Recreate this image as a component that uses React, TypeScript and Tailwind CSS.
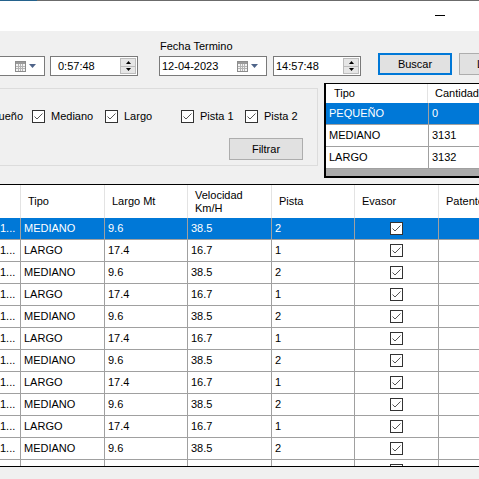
import React from "react";

const rows = Array.from({ length: 12 }, (_, i) =>
  i % 2 === 0
    ? { tipo: "MEDIANO", largo: "9.6", vel: "38.5", pista: "2" }
    : { tipo: "LARGO", largo: "17.4", vel: "16.7", pista: "1" }
);

function CheckGlyph() {
  return (
    <svg width="13" height="13" viewBox="0 0 13 13" className="shrink-0">
      <rect x="0.5" y="0.5" width="12" height="12" fill="#fff" stroke="#333" />
      <polyline points="2.5,6.5 5,9 10.5,3.5" fill="none" stroke="#555" strokeWidth="1" />
    </svg>
  );
}

function CalendarIcon() {
  return (
    <svg width="11" height="11" viewBox="0 0 11 11" className="shrink-0">
      <rect x="0.5" y="0.5" width="10" height="10" fill="#f4f4f4" stroke="#8c8c8c" />
      <rect x="1" y="1" width="9" height="2" fill="#9a9a9a" />
      <path d="M3.5 3v7M5.5 3v7M7.5 3v7M1 5.5h9M1 7.5h9" stroke="#b4b4b4" strokeWidth="1" />
    </svg>
  );
}

function DropArrow() {
  return (
    <svg width="7" height="4" viewBox="0 0 7 4" className="shrink-0">
      <polygon points="0,0 7,0 3.5,4" fill="#4f6489" />
    </svg>
  );
}

function Spinner() {
  return (
    <div className="mr-px flex h-[16px] w-[16px] shrink-0 flex-col border border-[#bcbcbc] bg-[#e6e6e6]">
      <div className="flex flex-1 items-center justify-center border-b border-[#bcbcbc]">
        <svg width="5" height="3" viewBox="0 0 5 3">
          <polygon points="2.5,0 5,3 0,3" fill="#000" />
        </svg>
      </div>
      <div className="flex flex-1 items-center justify-center">
        <svg width="5" height="3" viewBox="0 0 5 3">
          <polygon points="0,0 5,0 2.5,3" fill="#000" />
        </svg>
      </div>
    </div>
  );
}

function Check({ label, className }: { label: string; className?: string }) {
  return (
    <div className={`flex shrink-0 items-center gap-[6px] ${className ?? ""}`}>
      <CheckGlyph />
      <span className="whitespace-nowrap">{label}</span>
    </div>
  );
}

export default function App() {
  return (
    <div className="h-[479px] w-[479px] overflow-hidden bg-[#f0f0f0] font-['Liberation_Sans',Arial,sans-serif] text-[11px] leading-[13px] text-black">
      {/* window edge */}
      <div className="flex h-px">
        <div className="w-[37px] bg-[#24628c]" />
        <div className="flex-1 bg-[#6b6b6b]" />
      </div>

      {/* title bar */}
      <div className="flex h-[30px] justify-end bg-white pt-[14px]">
        <div className="mr-[34px] h-px w-[10px] bg-black" />
      </div>

      {/* dates */}
      <div className="h-[22px] pl-[160px] pt-[9px]">Fecha Termino</div>
      <div className="flex h-[30px] items-start">
        <div className="mt-[3px] flex h-[20px] w-[45px] shrink-0 items-center justify-end gap-[3px] border border-l-0 border-[#7a7a7a] bg-white pr-[8px]">
          <CalendarIcon />
          <DropArrow />
        </div>
        <div className="ml-[5px] mt-[3px] flex h-[20px] w-[88px] shrink-0 items-center justify-between border border-[#7a7a7a] bg-white pl-[7px]">
          <span>0:57:48</span>
          <Spinner />
        </div>
        <div className="ml-[21px] mt-[3px] flex h-[20px] w-[108px] shrink-0 items-center border border-[#7a7a7a] bg-white pl-[2px] pr-[8px]">
          <span className="flex-1">12-04-2023</span>
          <div className="flex items-center gap-[3px]">
            <CalendarIcon />
            <DropArrow />
          </div>
        </div>
        <div className="ml-[6px] mt-[3px] flex h-[20px] w-[88px] shrink-0 items-center justify-between border border-[#7a7a7a] bg-white pl-[2px]">
          <span>14:57:48</span>
          <Spinner />
        </div>
        <button className="ml-[17px] flex h-[22px] w-[74px] shrink-0 items-center justify-center border-2 border-[#0078d7] bg-[#e1e1e1]">
          Buscar
        </button>
        <button className="ml-[7px] flex h-[22px] w-[74px] shrink-0 items-center justify-start border border-[#adadad] bg-[#e1e1e1] pl-[17px]">
          Limpiar
        </button>
      </div>

      {/* filters + summary */}
      <div className="flex h-[101px]">
        <div className="mt-[5px] h-[78px] w-[318px] shrink-0 overflow-hidden border border-l-0 border-[#dcdcdc] pt-[21px]">
          <div className="flex h-[13px] items-center">
            <Check label="Pequeño" className="ml-[-40px] w-[72px]" />
            <Check label="Mediano" className="w-[73px]" />
            <Check label="Largo" className="w-[76px]" />
            <Check label="Pista 1" className="w-[64px]" />
            <Check label="Pista 2" />
          </div>
          <button className="ml-[229px] mt-[15px] flex h-[22px] w-[74px] items-center justify-center border border-[#adadad] bg-[#e1e1e1]">
            Filtrar
          </button>
        </div>
        <div className="ml-[6px] flex h-[95px] flex-1 flex-col overflow-hidden border-b-2 border-l-2 border-t border-black bg-[#ababab]">
          <div className="flex h-[19px] shrink-0 bg-white">
            <div className="flex w-[103px] items-center border-r border-[#e3e3e3] pl-[8px]">Tipo</div>
            <div className="flex flex-1 items-center pl-[7px]">Cantidad</div>
          </div>
          {[
            ["PEQUEÑO", "0"],
            ["MEDIANO", "3131"],
            ["LARGO", "3132"],
          ].map(([t, c], i) => (
            <div
              key={t}
              className={`flex h-[22px] shrink-0 border-b border-[#a0a0a0] ${i === 0 ? "bg-[#0078d7] text-white" : "bg-white"}`}
            >
              <div className="flex w-[103px] items-center border-r border-[#a0a0a0] pl-[3px]">{t}</div>
              <div className="flex flex-1 items-center pl-[3px]">{c}</div>
            </div>
          ))}
        </div>
      </div>

      {/* main grid */}
      <div className="flex h-[283px] flex-col overflow-hidden border-y border-black bg-white">
        <div className="flex h-[33px] shrink-0">
          <div className="w-[21px] shrink-0 border-r border-[#e3e3e3]" />
          <div className="flex w-[84px] shrink-0 items-center border-r border-[#e3e3e3] pl-[7px]">Tipo</div>
          <div className="flex w-[83px] shrink-0 items-center border-r border-[#e3e3e3] pl-[7px]">Largo Mt</div>
          <div className="flex w-[84px] shrink-0 items-center border-r border-[#e3e3e3] pl-[7px]">
            Velocidad
            <br />
            Km/H
          </div>
          <div className="flex w-[83px] shrink-0 items-center border-r border-[#e3e3e3] pl-[7px]">Pista</div>
          <div className="flex w-[84px] shrink-0 items-center border-r border-[#e3e3e3] pl-[7px]">Evasor</div>
          <div className="flex flex-1 items-center whitespace-nowrap pl-[7px]">Patente</div>
        </div>
        {rows.map((r, i) => (
          <div
            key={i}
            className={`flex h-[22px] shrink-0 border-b border-[#a0a0a0] ${i === 0 ? "bg-[#0078d7] text-white" : "bg-white"}`}
          >
            <div className="flex w-[21px] shrink-0 items-center overflow-hidden border-r border-[#a0a0a0]">1...</div>
            <div className="flex w-[84px] shrink-0 items-center border-r border-[#a0a0a0] pl-[3px]">{r.tipo}</div>
            <div className="flex w-[83px] shrink-0 items-center border-r border-[#a0a0a0] pl-[3px]">{r.largo}</div>
            <div className="flex w-[84px] shrink-0 items-center border-r border-[#a0a0a0] pl-[3px]">{r.vel}</div>
            <div className="flex w-[83px] shrink-0 items-center border-r border-[#a0a0a0] pl-[3px]">{r.pista}</div>
            <div className="flex w-[84px] shrink-0 items-center justify-center border-r border-[#a0a0a0]">
              <CheckGlyph />
            </div>
            <div className="flex-1" />
          </div>
        ))}
      </div>
    </div>
  );
}
